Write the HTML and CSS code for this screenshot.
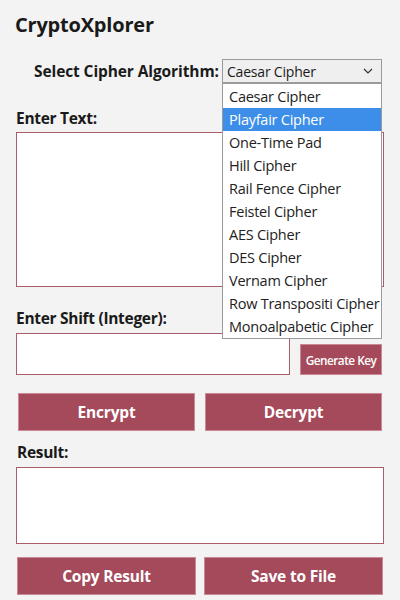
FILE: index.html
```html
<!DOCTYPE html>
<html>
<head>
<meta charset="utf-8">
<link rel="stylesheet" href="styles.css">
</head>
<body>
<div class="app">
  <h1 class="title">CryptoXplorer</h1>
  <div class="select-row">
    <label class="label sel-label">Select Cipher Algorithm:</label>
    <div class="select-wrap">
      <div class="select">
        <span>Caesar Cipher</span>
        <svg class="chev" width="10" height="6" viewBox="0 0 10 6"><path d="M1 1 L5 5 L9 1" fill="none" stroke="#333" stroke-width="1.2"/></svg>
      </div>
      <ul class="dropdown">
        <li>Caesar Cipher</li>
        <li class="active">Playfair Cipher</li>
        <li>One-Time Pad</li>
        <li>Hill Cipher</li>
        <li>Rail Fence Cipher</li>
        <li>Feistel Cipher</li>
        <li>AES Cipher</li>
        <li>DES Cipher</li>
        <li>Vernam Cipher</li>
        <li>Row Transpositi Cipher</li>
        <li>Monoalpabetic Cipher</li>
      </ul>
    </div>
  </div>
  <div class="label text-label">Enter Text:</div>
  <div class="box text-box"></div>
  <div class="label shift-label">Enter Shift (Integer):</div>
  <div class="shift-row">
    <div class="box shift-box"></div>
    <button class="btn small">Generate Key</button>
  </div>
  <div class="btn-row first">
    <button class="btn">Encrypt</button>
    <button class="btn">Decrypt</button>
  </div>
  <div class="label result-label">Result:</div>
  <div class="box result-box"></div>
  <div class="btn-row last">
    <button class="btn">Copy Result</button>
    <button class="btn">Save to File</button>
  </div>
</div>
</body>
</html>
```

FILE: styles.css
```css
* { box-sizing: border-box; }
html, body { margin: 0; padding: 0; background: #f3f3f3; }
body { font-family: "Open Sans", "Noto Sans", sans-serif; color: #1a1a1a; }
.app { padding: 10px 17px 0 15px; width: 400px; height: 600px; overflow: hidden; }
.title { font-size: 20px; font-weight: 700; margin: 0; line-height: 30px; letter-spacing: -0.2px; }
.label { font-size: 15.5px; font-weight: 700; line-height: 22px; letter-spacing: -0.3px; }
.select-row { display: flex; align-items: flex-start; margin-top: 19px; padding-left: 19px; }
.sel-label { padding-top: 1px; width: 188px; letter-spacing: -0.1px; }
.select-wrap { position: relative; width: 160px; margin-left: 0; }
.select { height: 24px; border: 1px solid #9a9a9a; background: #efefef; display: flex; align-items: center; justify-content: space-between; padding: 0 8px 0 4px; font-size: 14px; letter-spacing: -0.2px; }
.chev { display: block; }
.dropdown { position: absolute; top: 24px; left: 0; width: 160px; margin: 0; padding: 1px 0 0; list-style: none; background: #fff; border: 1px solid #9a9a9a; z-index: 5; }
.dropdown li { height: 23px; line-height: 23px; padding-left: 6px; font-size: 14.5px; letter-spacing: -0.25px; color: #222; white-space: nowrap; }
.dropdown li.active { background: #3d8ee8; color: #fff; }
.text-label { margin-top: 24px; padding-left: 1px; }
.box { background: #fff; border: 1px solid #a85d6d; }
.text-box { margin-top: 3px; height: 155px; width: 368px; margin-left: 1px; }
.shift-label { margin-top: 20px; padding-left: 1px; }
.shift-row { display: flex; align-items: flex-start; margin-top: 4px; padding-left: 1px; }
.shift-box { width: 274px; height: 42px; }
.btn { border: none; background: #a44a5a; color: #fff; font-family: inherit; font-weight: 700; font-size: 15.5px; letter-spacing: -0.2px; height: 38px; padding: 0; box-shadow: 0 0 0 1px #c98a96 inset; }
.btn.small { width: 82px; height: 31px; font-size: 11.8px; font-weight: 600; margin-left: 10px; margin-top: 11px; letter-spacing: -0.5px; white-space: nowrap; }
.btn-row { display: flex; gap: 10px; padding-left: 3px; }
.btn-row .btn { flex: 1; }
.btn-row.first { margin-top: 18px; width: 367px; }
.result-label { margin-top: 10px; padding-left: 2px; }
.result-box { margin-top: 4px; height: 77px; width: 368px; margin-left: 1px; }
.btn-row.last { margin-top: 13px; width: 368px; padding-left: 2px; gap: 8px; }
```
